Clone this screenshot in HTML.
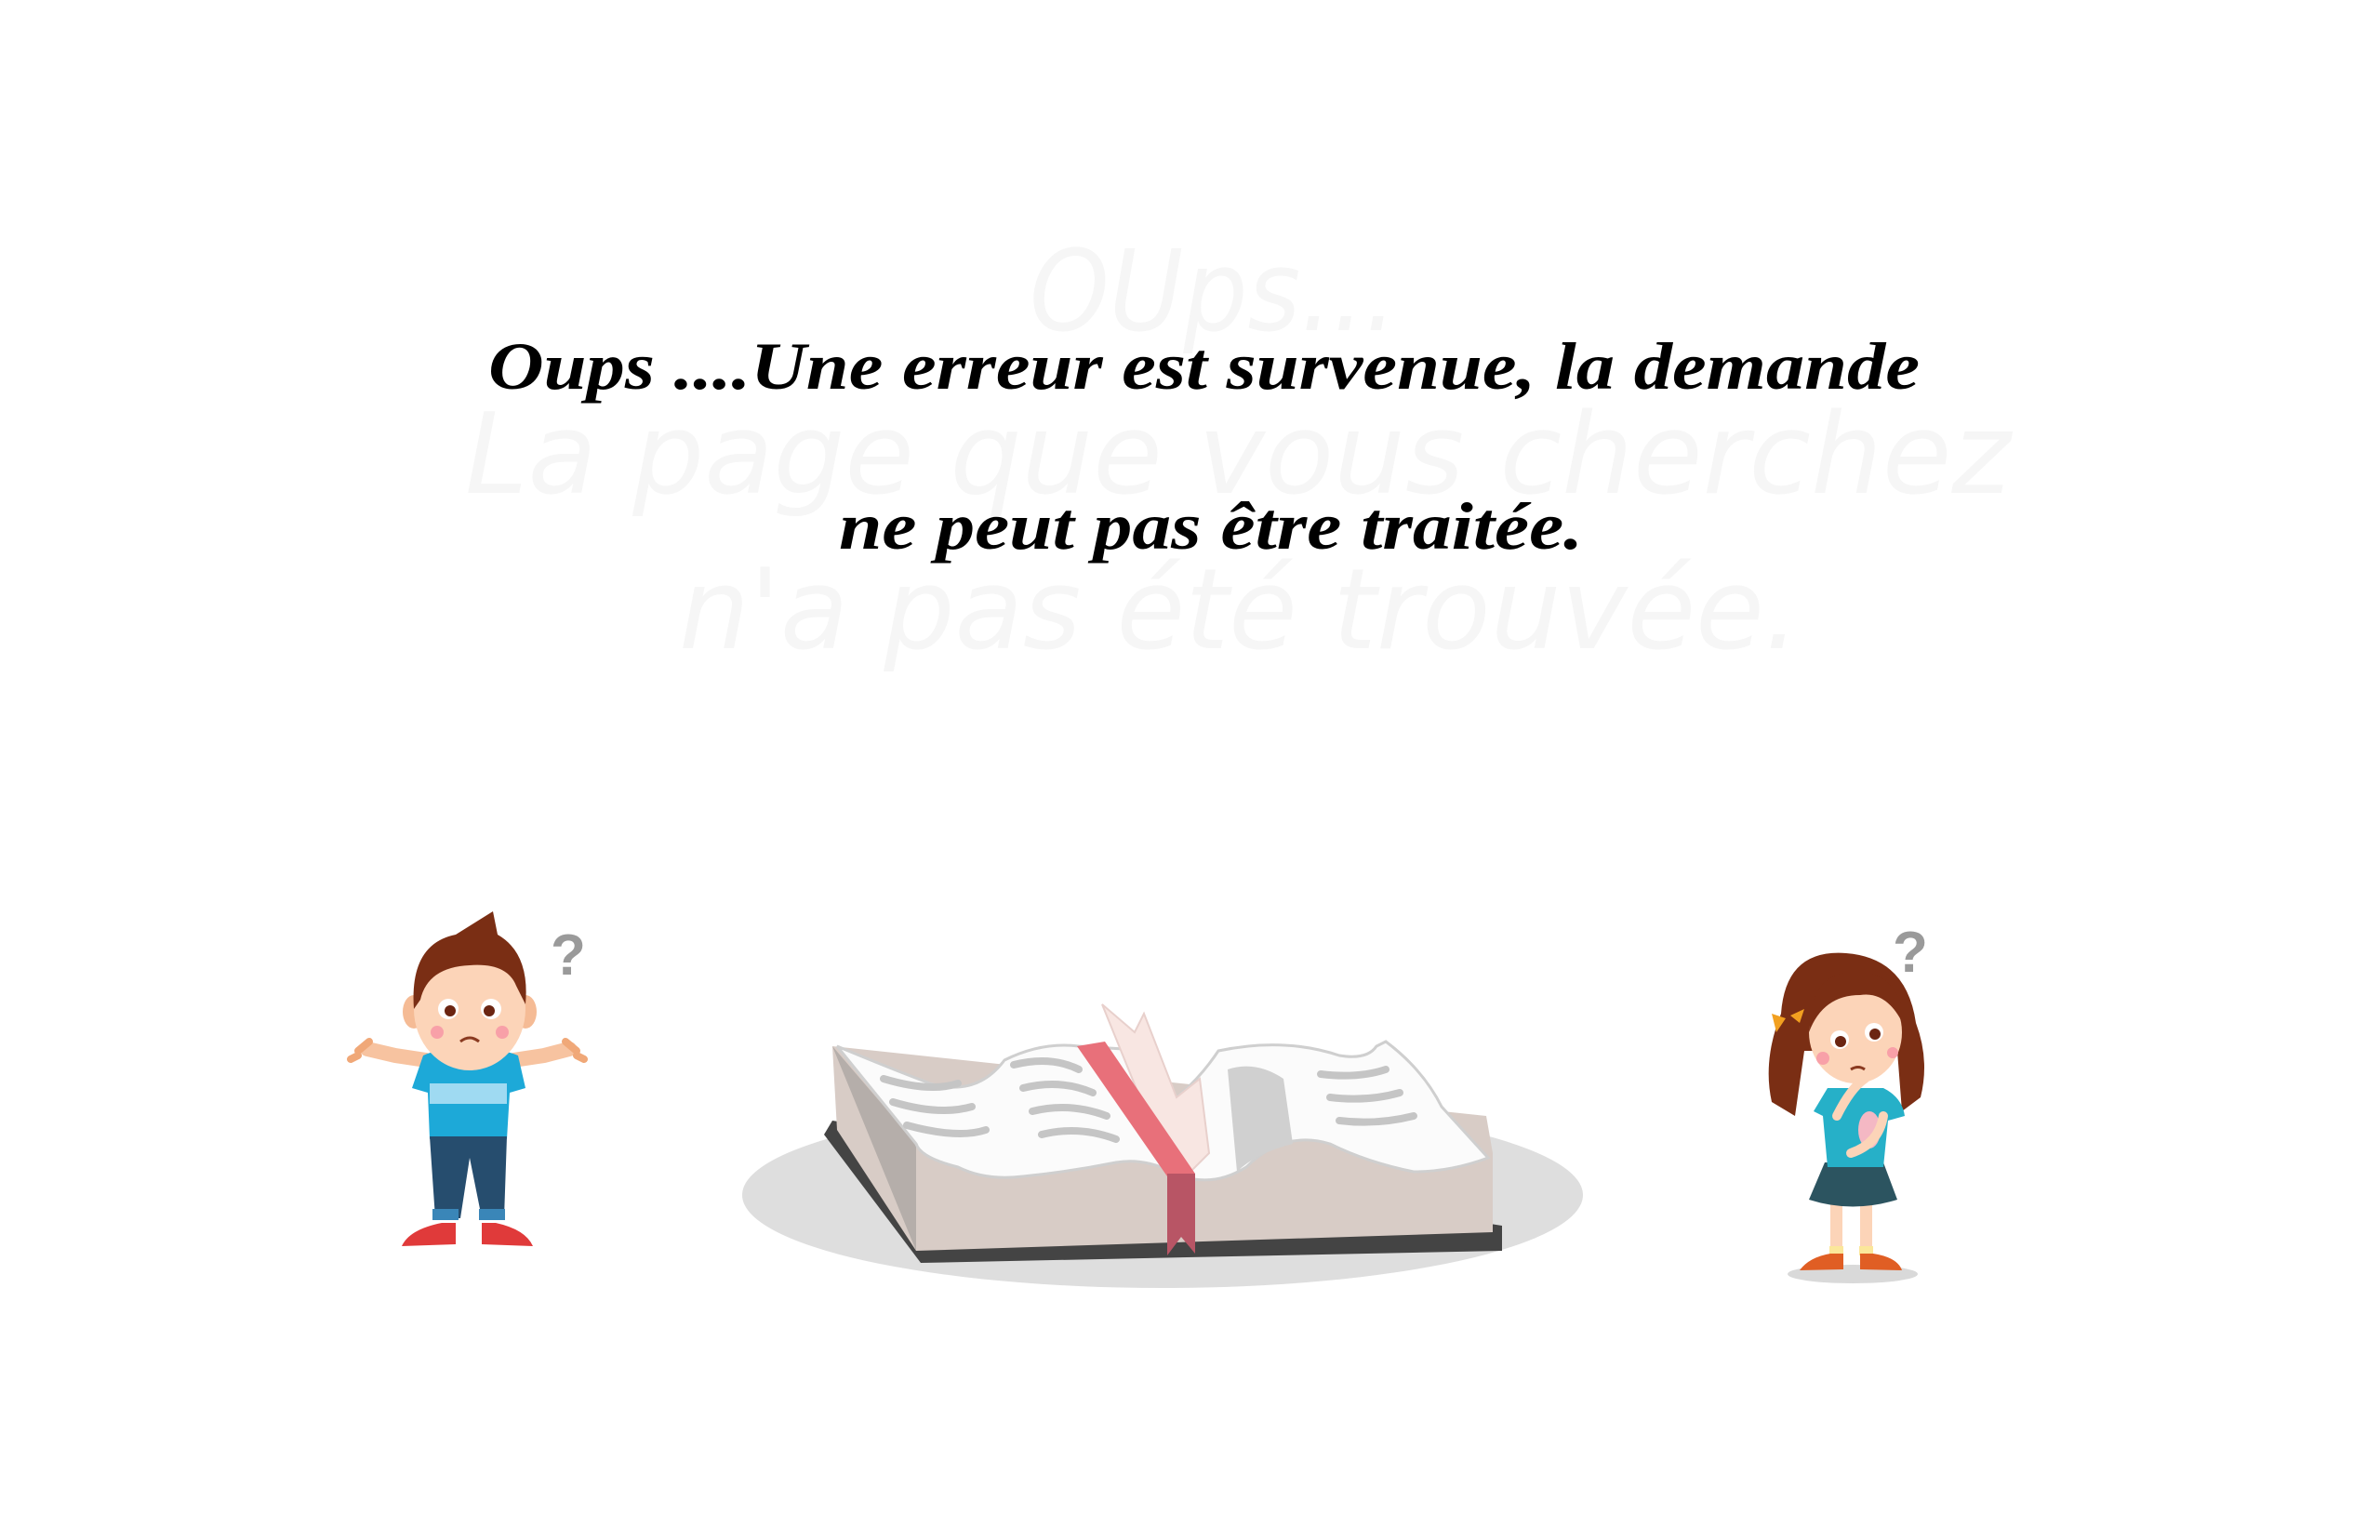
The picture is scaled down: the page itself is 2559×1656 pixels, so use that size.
<!DOCTYPE html>
<html><head><meta charset="utf-8">
<style>
html,body{margin:0;padding:0;background:#fff;width:2559px;height:1656px;overflow:hidden}
svg{display:block}
</style></head>
<body>
<svg width="2559" height="1656" viewBox="0 0 2559 1656" xmlns="http://www.w3.org/2000/svg">
<g fill="#f6f6f6" font-family="'DejaVu Sans','Liberation Sans',sans-serif" font-style="italic" font-weight="300">
<text x="1107" y="355" font-size="120" textLength="395" lengthAdjust="spacingAndGlyphs">OUps...</text>
<text x="500" y="530" font-size="120" textLength="1662" lengthAdjust="spacingAndGlyphs">La page que vous cherchez</text>
<text x="730" y="697" font-size="120" textLength="1205" lengthAdjust="spacingAndGlyphs">n'a pas été trouvée.</text>
</g>
<g fill="#000" font-family="'Liberation Serif',serif" font-style="italic" font-weight="bold">
<text x="525" y="418" font-size="72" textLength="1539" lengthAdjust="spacingAndGlyphs">Oups ....Une erreur est survenue, la demande</text>
<text x="902" y="590" font-size="72" textLength="800" lengthAdjust="spacingAndGlyphs">ne peut pas être traitée.</text>
</g>

<g>
<text x="592" y="1048" font-family="'Liberation Sans',sans-serif" font-weight="bold" font-size="62" fill="#9a9a9a">?</text>
<path d="M458 1140 L425 1135 L395 1128" stroke="#f7c3a0" stroke-width="16" fill="none" stroke-linecap="round"/>
<path d="M552 1140 L585 1135 L612 1128" stroke="#f7c3a0" stroke-width="16" fill="none" stroke-linecap="round"/>
<path d="M385 1130 l12 -10 M385 1135 l-8 4" stroke="#f0a878" stroke-width="8" stroke-linecap="round"/>
<path d="M620 1130 l-12 -10 M620 1135 l8 4" stroke="#f0a878" stroke-width="8" stroke-linecap="round"/>
<rect x="490" y="1115" width="28" height="25" fill="#f2b48f"/>
<path d="M455 1135 Q470 1128 490 1128 L520 1128 Q540 1128 557 1135 L565 1170 L548 1175 L545 1225 L462 1225 L460 1175 L443 1170 Z" fill="#1da9d8"/>
<rect x="462" y="1165" width="83" height="22" fill="#9fdaf2"/>
<path d="M462 1222 L545 1222 L542 1310 L518 1310 L505 1245 L495 1310 L468 1310 Z" fill="#264d6e"/>
<rect x="465" y="1300" width="28" height="12" fill="#3a86b8"/>
<rect x="515" y="1300" width="28" height="12" fill="#3a86b8"/>
<path d="M475 1315 L490 1315 L490 1338 L432 1340 Q440 1322 475 1315 Z" fill="#e03a3a"/>
<path d="M518 1315 L533 1315 Q565 1322 573 1340 L518 1338 Z" fill="#e03a3a"/>
<ellipse cx="445" cy="1088" rx="12" ry="18" fill="#f5bb95"/>
<ellipse cx="565" cy="1088" rx="12" ry="18" fill="#f5bb95"/>
<ellipse cx="505" cy="1085" rx="60" ry="66" fill="#fcd4b8"/>
<path d="M445 1085 Q440 1015 490 1005 L530 980 L535 1005 Q570 1025 565 1080 L555 1060 Q545 1035 505 1038 Q460 1040 452 1075 Z" fill="#7a2e14"/>
<circle cx="482" cy="1085" r="11" fill="#fff"/><circle cx="528" cy="1085" r="11" fill="#fff"/>
<circle cx="484" cy="1087" r="6" fill="#6b2512"/><circle cx="526" cy="1087" r="6" fill="#6b2512"/>
<circle cx="470" cy="1110" r="7" fill="#f8a0a8"/><circle cx="540" cy="1110" r="7" fill="#f8a0a8"/>
<path d="M495 1120 Q505 1112 515 1120" stroke="#8a3a20" stroke-width="3" fill="none"/>
</g>

<g>
<ellipse cx="1250" cy="1285" rx="452" ry="100" fill="#dedede"/>
<path d="M886 1220 L990 1358 L1615 1345 L1615 1318 L895 1205 Z" fill="#444"/>
<path d="M895 1125 L900 1215 L985 1345 L1605 1325 L1605 1240 L1598 1200 Z" fill="#d8ccc6"/>
<path d="M895 1125 L985 1345 L985 1230 Z" fill="#b5aeaa"/>
<path d="M900 1125 Q960 1150 1000 1165 Q1050 1180 1080 1140 Q1120 1120 1160 1125 L1240 1130 L1265 1180 Q1290 1160 1310 1130 Q1380 1115 1440 1135 Q1470 1140 1480 1125 L1490 1120 Q1530 1150 1550 1190 L1600 1245 Q1560 1260 1520 1260 Q1470 1250 1430 1230 Q1380 1215 1340 1255 Q1300 1280 1260 1260 Q1230 1245 1200 1250 Q1150 1260 1100 1265 Q1060 1270 1030 1255 Q990 1245 985 1230 Z" fill="#fbfbfb" stroke="#cfcfcf" stroke-width="3"/>
<g stroke="#c5c5c5" stroke-width="8" fill="none" stroke-linecap="round">
<path d="M950 1160 Q1000 1175 1030 1165"/><path d="M960 1185 Q1010 1200 1045 1190"/><path d="M975 1210 Q1030 1225 1060 1215"/>
<path d="M1090 1145 Q1130 1135 1160 1150"/><path d="M1100 1170 Q1140 1160 1175 1175"/><path d="M1110 1195 Q1150 1185 1190 1200"/><path d="M1120 1220 Q1160 1210 1200 1225"/>
<path d="M1420 1155 Q1460 1160 1490 1150"/><path d="M1430 1180 Q1470 1185 1505 1175"/><path d="M1440 1205 Q1480 1210 1520 1200"/>
</g>
<path d="M1320 1150 Q1350 1140 1380 1160 L1390 1230 Q1350 1240 1330 1260 Z" fill="#d0d0d0"/>
<path d="M1185 1080 L1220 1110 L1230 1090 L1265 1180 L1290 1160 L1300 1240 L1270 1270 L1250 1240 Z" fill="#f8e6e2" stroke="#e8d0cc" stroke-width="2"/>
<path d="M1158 1125 L1188 1120 L1285 1262 L1285 1340 L1270 1325 L1255 1345 L1255 1265 Z" fill="#e8707a"/>
<path d="M1255 1262 L1285 1262 L1285 1348 L1270 1330 L1255 1350 Z" fill="#b85565"/>
</g>

<g>
<ellipse cx="1992" cy="1370" rx="70" ry="10" fill="#d9d9d9"/>
<text x="2035" y="1045" font-family="'Liberation Sans',sans-serif" font-weight="bold" font-size="62" fill="#9a9a9a">?</text>
<path d="M1915 1090 Q1920 1020 1985 1025 Q2050 1030 2060 1100 Q2075 1140 2065 1180 L2045 1195 L2040 1130 L1940 1130 L1930 1200 L1905 1185 Q1895 1140 1915 1090 Z" fill="#7a2e14"/>
<rect x="1968" y="1290" width="13" height="60" fill="#fcd4b8"/>
<rect x="2000" y="1290" width="13" height="60" fill="#fcd4b8"/>
<rect x="1967" y="1340" width="15" height="10" fill="#fbe79a"/>
<rect x="1999" y="1340" width="15" height="10" fill="#fbe79a"/>
<path d="M1968 1348 L1982 1348 L1982 1365 L1935 1366 Q1945 1352 1968 1348 Z" fill="#e05e24"/>
<path d="M2000 1348 L2014 1348 Q2040 1352 2045 1366 L2000 1365 Z" fill="#e05e24"/>
<path d="M1962 1250 L2025 1250 L2040 1290 Q1992 1305 1945 1290 Z" fill="#2c5460"/>
<path d="M1965 1170 L2025 1170 Q2045 1180 2048 1200 L2030 1205 L2025 1255 L1965 1255 L1960 1200 L1950 1195 Z" fill="#26b0c8"/>
<ellipse cx="2010" cy="1215" rx="12" ry="20" fill="#f4b8c4"/>
<path d="M1990 1240 Q2020 1230 2025 1200" stroke="#fcd4b8" stroke-width="10" fill="none" stroke-linecap="round"/>
<path d="M1975 1200 Q1990 1170 2005 1160" stroke="#fcd4b8" stroke-width="10" fill="none" stroke-linecap="round"/>
<ellipse cx="1995" cy="1110" rx="50" ry="55" fill="#fcd4b8"/>
<path d="M1945 1110 Q1945 1045 1995 1045 Q2045 1045 2048 1105 Q2030 1065 2000 1070 Q1960 1070 1945 1110 Z" fill="#7a2e14"/>
<path d="M1905 1090 L1920 1095 L1910 1110 Z M1925 1092 L1940 1085 L1935 1100 Z" fill="#f2a020"/>
<circle cx="1978" cy="1118" r="10" fill="#fff"/><circle cx="2015" cy="1110" r="10" fill="#fff"/>
<circle cx="1979" cy="1120" r="6" fill="#6b2512"/><circle cx="2016" cy="1112" r="6" fill="#6b2512"/>
<circle cx="1960" cy="1138" r="7" fill="#f8a0a8"/><circle cx="2035" cy="1132" r="6" fill="#f8a0a8"/>
<path d="M1990 1150 Q1998 1145 2005 1150" stroke="#8a3a20" stroke-width="3" fill="none"/>
</g>
</svg>
</body></html>
